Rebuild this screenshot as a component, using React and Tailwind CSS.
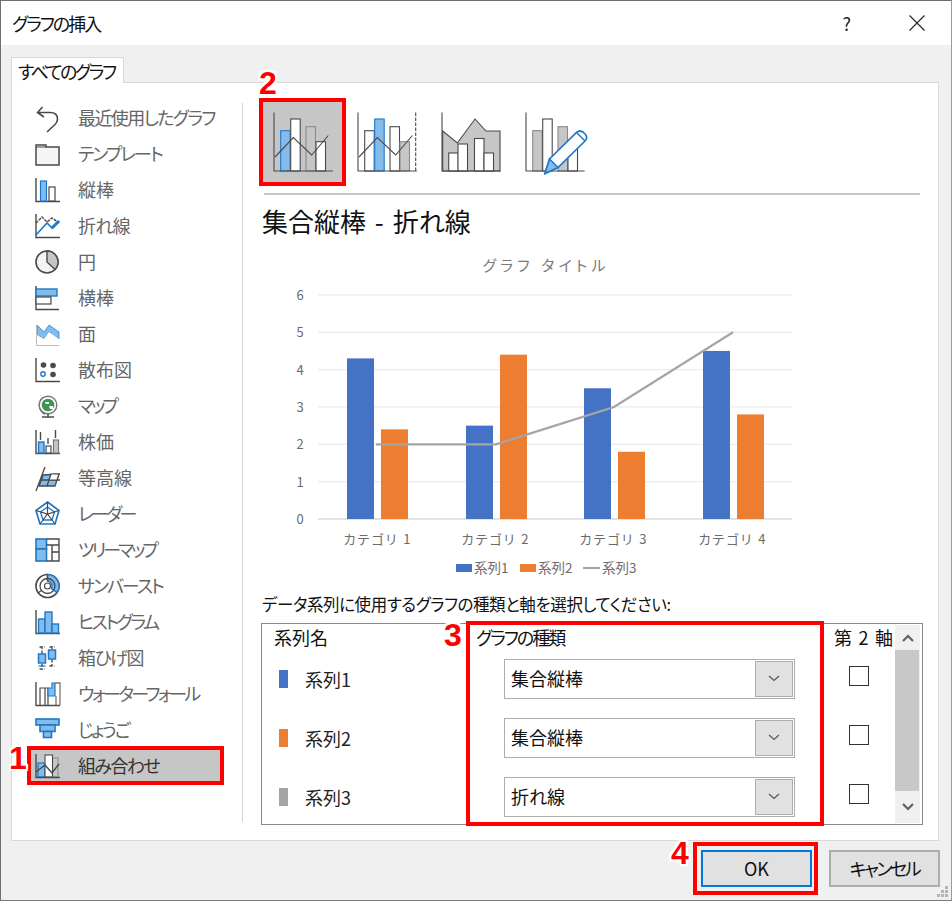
import React from "react";

const D = "#4a4a4a";
const B = "#1f78c8";
const L = "#83bbea";
const G = "#c6c6c6";

const Svg = ({ children }) => (
  <svg width="26" height="26" viewBox="0 0 26 26" fill="none" className="shrink-0 overflow-visible">
    {children}
  </svg>
);
const Axis = () => <path d="M1 1V24.5H25" stroke={D} strokeWidth="1.4" fill="none" />;

const icons = [
  <Svg><path d="M7.5 2L2.5 7.5L9 12M2.5 7.5H15Q22.5 7.5 22.5 14Q22.5 17 20 19.5L12 27" stroke={D} strokeWidth="1.6" /></Svg>,
  <Svg><path d="M1 4H11V6H24V24H1Z" fill="#f5f5f5" stroke={D} strokeWidth="1.5" /><path d="M1 6H11" stroke={D} strokeWidth="1" /></Svg>,
  <Svg><Axis /><rect x="5.5" y="4" width="6" height="20" fill={L} stroke={B} strokeWidth="1.2" /><rect x="14" y="10" width="6" height="14" fill="#fff" stroke={D} strokeWidth="1.2" /></Svg>,
  <Svg><Axis /><path d="M1 22L12 10L17 15L24 8" stroke={B} strokeWidth="1.6" /><path d="M1 10L7 4L12 9L17 5L24 10" stroke={D} strokeWidth="1.4" strokeDasharray="3 1" /><path d="M17 15L24 8" stroke={B} strokeWidth="3" /></Svg>,
  <Svg><circle cx="12" cy="13" r="11" fill="#f4f4f4" stroke={D} strokeWidth="1.6" /><path d="M12 13V2A11 11 0 0 1 20 20.5Z" fill={G} stroke={D} strokeWidth="1.4" /></Svg>,
  <Svg><path d="M1 1V24.5H24" stroke={D} strokeWidth="1.4" /><rect x="1" y="4" width="21" height="7" fill={L} stroke={B} strokeWidth="1.4" /><rect x="1" y="12" width="15" height="7" fill="#fff" stroke={D} strokeWidth="1.2" /></Svg>,
  <Svg><path d="M2 4L9 11L14 4L24 11V18L14 11L9 18L2 14Z" fill={L} stroke={B} strokeWidth="0.7" /><path d="M2 14L9 18L14 11L24 18V24H2Z" fill="#fff" /><path d="M1.5 4V24.5H24" stroke="#bbb" strokeWidth="1" /></Svg>,
  <Svg><Axis /><circle cx="8.5" cy="8" r="2.8" fill={D} /><circle cx="18" cy="8.5" r="2.8" fill={D} /><circle cx="18" cy="17.5" r="2.8" fill={D} /><circle cx="8" cy="17" r="2.2" fill="#fff" stroke={B} strokeWidth="1.4" /></Svg>,
  <Svg><path d="M8 4.5A10 10 0 0 0 10 21" stroke={D} strokeWidth="1.6" /><circle cx="13" cy="12" r="8.8" fill="#fff" stroke="#777" strokeWidth="1.4" /><circle cx="13" cy="12" r="6.3" fill="#3d9651" /><path d="M10 9H14V11H11ZM14 13H18V16H15Z" fill="#fff" /><path d="M7 24H19M13 21V24" stroke={D} strokeWidth="1.5" /></Svg>,
  <Svg><Axis /><rect x="3.5" y="13" width="5.5" height="11" fill={L} stroke={B} strokeWidth="1.4" /><rect x="11" y="17" width="5" height="7" fill="#fff" stroke={D} strokeWidth="1.2" /><rect x="18.5" y="11" width="5" height="13" fill={G} stroke="#777" strokeWidth="1.2" /><path d="M5.5 3V11M13 9V15M20.5 1V9" stroke={D} strokeWidth="1.4" /></Svg>,
  <Svg><path d="M8 10L24 9L20 21L4 21Z" fill={L} stroke={D} strokeWidth="1.3" /><path d="M8 10L4 21" stroke={D} /><path d="M10 2L1 26M16 9L12 21M6 15H25" stroke={D} strokeWidth="1.3" /><path d="M16 9H24L22 15H14Z" fill="#fff" stroke={D} strokeWidth="1.2" /></Svg>,
  <Svg><path d="M12.5 1L24 9.5L20 23H5L1 9.5Z" fill="#fff" stroke={B} strokeWidth="1.7" /><path d="M12.5 6L19.5 11L17 19H8L5.5 11Z" stroke={B} strokeWidth="1.3" /><path d="M12.5 1V13M1 9.5L12.5 13L24 9.5M5 23L12.5 13L20 23" stroke={D} strokeWidth="1.2" /></Svg>,
  <Svg><rect x="1" y="2" width="10.5" height="10" fill={L} stroke={B} strokeWidth="1.6" /><rect x="1" y="12" width="10.5" height="12" fill={L} stroke={B} strokeWidth="1.6" /><path d="M11.5 2H24V24H11.5M17 8V24M11.5 8H24M17 15H24" stroke={D} strokeWidth="1.4" /></Svg>,
  <Svg><circle cx="12.5" cy="13" r="11.5" stroke={D} strokeWidth="1.7" /><path d="M12.5 1.5A11.5 11.5 0 0 1 22 19.5L16.5 15.5A5 5 0 0 0 12.5 8Z" fill={L} stroke={B} strokeWidth="1.5" /><circle cx="12.5" cy="13" r="7.5" stroke={D} strokeWidth="1.3" /><circle cx="12.5" cy="13" r="3" stroke={D} strokeWidth="1.2" /><path d="M3 20L7 17M12.5 1.5V8" stroke={D} strokeWidth="1.2" /></Svg>,
  <Svg><Axis /><rect x="3.5" y="10" width="6.5" height="14" fill={L} stroke={B} strokeWidth="1.4" /><rect x="10" y="3" width="7" height="21" fill={L} stroke={B} strokeWidth="1.4" /><rect x="17" y="15" width="6.5" height="9" fill={L} stroke={B} strokeWidth="1.4" /></Svg>,
  <Svg><path d="M7 1V25M17 1V21M4.5 2H9.5M14.5 2H19.5M4.5 24H9.5M14.5 21H19.5" stroke={D} strokeWidth="1.4" strokeDasharray="3 1.5" /><rect x="3.5" y="9" width="7" height="9" fill={L} stroke={B} strokeWidth="1.5" /><rect x="13.5" y="5" width="7" height="9" fill={L} stroke={B} strokeWidth="1.5" /><path d="M3.5 21H10.5" stroke={B} strokeWidth="1.2" /></Svg>,
  <Svg><Axis /><path d="M5 24V7H10V24M13 24V7H10" stroke={D} strokeWidth="1.2" /><path d="M13 15V7H17V2H20V15Z" fill={L} stroke={B} strokeWidth="1.2" /><path d="M20 2H25V24M21 24V15" stroke="#777" strokeWidth="1.3" /></Svg>,
  <Svg><rect x="1" y="2" width="23" height="6" fill={L} stroke={B} strokeWidth="1.6" /><rect x="5" y="8" width="15" height="6.5" fill={L} stroke={B} strokeWidth="1.6" /><rect x="8.5" y="14.5" width="8" height="6" fill={L} stroke={B} strokeWidth="1.6" /></Svg>,
  <Svg><rect x="15" y="5" width="8" height="19" fill={G} stroke="#888" strokeWidth="1" /><rect x="3" y="10" width="7" height="14" fill={L} stroke={B} strokeWidth="1.3" /><rect x="10" y="2" width="7.5" height="22" fill="#fff" stroke={D} strokeWidth="1.1" /><Axis /><path d="M1 19L10 12L17 20L24 11" stroke={D} strokeWidth="1.4" /></Svg>,
];

const labels = [
  ["最近使用したグラフ", "tracking-[-1.6px]"],
  ["テンプレート", "tracking-[-2px]"],
  ["縦棒", ""],
  ["折れ線", "tracking-[-0.7px]"],
  ["円", ""],
  ["横棒", ""],
  ["面", ""],
  ["散布図", ""],
  ["マップ", "tracking-[-3px]"],
  ["株価", ""],
  ["等高線", ""],
  ["レーダー", "tracking-[-2.8px]"],
  ["ツリーマップ", "tracking-[-3px]"],
  ["サンバースト", "tracking-[-2px]"],
  ["ヒストグラム", "tracking-[-2.5px]"],
  ["箱ひげ図", "tracking-[-1.5px]"],
  ["ウォーターフォール", "tracking-[-2.6px]"],
  ["じょうご", "tracking-[-2.2px]"],
  ["組み合わせ", "tracking-[-1.6px]"],
];

const LINE = "M2 46L20.3 26.5L38.7 44L55.3 24.5";

const Top = ({ children }) => (
  <svg width="60" height="62" viewBox="0 0 60 62" fill="none" className="overflow-visible">{children}</svg>
);
const Bar = ({ x, w = 9.5, top, kind }) => {
  const s = { b: [L, B], w: ["#fff", D], g: [G, "#8a8a8a"] }[kind];
  return <rect x={x} y={top} width={w} height={60 - top} fill={s[0]} stroke={s[1]} strokeWidth="1.1" />;
};
const AxisT = ({ to = 59.7 }) => <path d={`M1 1.5V60H${to}`} stroke={D} strokeWidth="1.1" />;

const tiles = [
  <Top><Bar x={33} top={15.7} kind="g" /><Bar x={7.7} top={19.7} kind="b" /><Bar x={17.7} top={8} kind="w" /><Bar x={43} top={30.7} kind="w" /><AxisT /><path d={LINE} stroke={D} strokeWidth="1.1" /></Top>,
  <Top><Bar x={7.7} top={19.7} kind="w" /><Bar x={17.7} top={8} kind="b" /><Bar x={33} top={15.7} kind="w" /><Bar x={43} top={30.7} kind="g" /><AxisT /><path d="M58.7 1.5V60" stroke={D} strokeWidth="1.1" strokeDasharray="3.5 1.5" /><path d={LINE} stroke={D} strokeWidth="1.1" /></Top>,
  <Top><path d="M1.7 20L16.3 32L34 8L45 20H59V60H1.7Z" fill={G} stroke={D} strokeWidth="1.1" /><Bar x={7.7} top={42} kind="w" /><Bar x={17} top={33} kind="w" /><Bar x={33.5} top={27.5} kind="w" /><Bar x={43} top={42} kind="w" /><AxisT /></Top>,
  <Top><Bar x={7.7} top={19.7} kind="g" /><Bar x={17.7} top={8} kind="w" /><Bar x={33} top={15.7} kind="g" /><Bar x={43} top={30.7} kind="w" /><AxisT /><path d="M24.5 48L51.5 21.5Q55 18.5 58.5 21.5L60.5 23.5Q63 27 60 30L33 56.5L20 62.5Z" fill="#fff" stroke={B} strokeWidth="1.7" /><path d="M24.5 48L33 56.5L20 62.5Z" fill={L} stroke={B} strokeWidth="1.5" /><path d="M51.5 21.5L60 30" stroke={B} strokeWidth="1.4" /></Top>,
];

const GRID = [6, 5, 4, 3, 2, 1, 0];
const yOf = (v) => 519 - v * 37.35;
const cats = [
  { n: "カテゴリ 1", b: [347, 4.3], o: [381, 2.4], c: 378 },
  { n: "カテゴリ 2", b: [466, 2.5], o: [500, 4.4], c: 496 },
  { n: "カテゴリ 3", b: [584, 3.5], o: [618, 1.8], c: 614 },
  { n: "カテゴリ 4", b: [703, 4.5], o: [737, 2.8], c: 733 },
];
const FONT = "'Noto Sans CJK JP', sans-serif";

const Chart = () => (
  <svg width="660" height="340" viewBox="262 250 660 340" className="block" fontFamily={FONT} style={{ fontFeatureSettings: "'palt'" }}>
    <text x="546" y="271" textAnchor="middle" fontSize="15" fill="#7a7a7a" letterSpacing="4.1">グラフ タイトル</text>
    {GRID.map((v) => (
      <g key={v}>
        <line x1="318" x2="792" y1={yOf(v)} y2={yOf(v)} stroke={v === 0 ? "#d9d9d9" : "#ececec"} strokeWidth="1.3" />
        <text x="300" y={yOf(v) + 5} textAnchor="middle" fontSize="13" fill="#6b6b6b">{v}</text>
      </g>
    ))}
    {cats.map((c) => (
      <g key={c.n}>
        <rect x={c.b[0]} y={yOf(c.b[1])} width="27" height={c.b[1] * 37.35} fill="#4472c4" />
        <rect x={c.o[0]} y={yOf(c.o[1])} width="27" height={c.o[1] * 37.35} fill="#ed7d31" />
        <text x={c.c} y="544" textAnchor="middle" fontSize="13" fill="#6b6b6b" letterSpacing="2">{c.n}</text>
      </g>
    ))}
    <path d={`M376 ${yOf(2)}L496 ${yOf(2)}L614 ${yOf(3)}L733 ${yOf(5)}`} fill="none" stroke="#a5a5a5" strokeWidth="2.2" />
    <rect x="456" y="564" width="16" height="8" fill="#4472c4" />
    <text x="474" y="573" fontSize="13.5" fill="#6b6b6b">系列1</text>
    <rect x="520" y="564" width="16" height="8" fill="#ed7d31" />
    <text x="538" y="573" fontSize="13.5" fill="#6b6b6b">系列2</text>
    <line x1="583" x2="600" y1="568" y2="568" stroke="#a5a5a5" strokeWidth="2" />
    <text x="602" y="573" fontSize="13.5" fill="#6b6b6b">系列3</text>
  </svg>
);

const Chevron = () => (
  <svg width="12" height="7" viewBox="0 0 12 7" fill="none"><path d="M1 1L6 5.5L11 1" stroke="#555" strokeWidth="1.1" /></svg>
);

const Row = ({ color, name, type }) => (
  <div className="flex items-center h-[59px] shrink-0">
    <div className="w-[242px] flex items-center pl-[17px]">
      <div className="w-[9px] h-[18px]" style={{ backgroundColor: color }} />
      <span className="ml-[17px] text-[18px] leading-[24px] text-[#222]">{name}</span>
    </div>
    <div className="w-[291px] h-[40px] border border-[#adadad] bg-white flex items-center justify-between pl-[6px] p-[1px]">
      <span className="text-[18px] leading-[24px] pb-[2px] text-[#111]">{type}</span>
      <div className="w-[38px] h-full bg-[#e1e1e1] border border-[#adadad] flex items-center justify-center"><Chevron /></div>
    </div>
    <div className="ml-[54px] mb-[5px] w-[20px] h-[20px] border border-[#333] bg-white" />
  </div>
);

const Num = ({ className, children }) => (
  <div className={`absolute font-bold text-[#ff0000] text-[32px] leading-[30px] [font-family:'Liberation_Sans',sans-serif] [text-shadow:2px_0_0_#fff,-2px_0_0_#fff,0_2px_0_#fff,0_-2px_0_#fff,2px_2px_0_#fff,-2px_-2px_0_#fff,2px_-2px_0_#fff,-2px_2px_0_#fff] ${className}`}>{children}</div>
);

export default function App() {
  return (
    <div className="relative w-[952px] h-[901px] overflow-hidden [font-family:'Noto_Sans_CJK_JP',sans-serif] [font-feature-settings:'palt']">
      <div className="h-full border border-[#6f6f6f] border-r-[#9a9a9a] border-b-[#7a7a7a] flex flex-col bg-[#f0f0f0]">
        <div className="h-[44px] shrink-0 bg-white flex items-center pl-[11px] pr-[26px]">
          <span className="text-[18px] leading-[24px] tracking-[-2px] text-[#111] flex-1">グラフの挿入</span>
          <span className="text-[18px] leading-[24px] text-[#222] mr-[58px]">?</span>
          <svg width="16" height="16" viewBox="0 0 16 16" fill="none"><path d="M0.5 0.5L15.5 15.5M15.5 0.5L0.5 15.5" stroke="#222" strokeWidth="1.1" /></svg>
        </div>
        <div className="flex-1 flex flex-col pt-[12px] pl-[10px] pr-[12px]">
          <div className="w-[113px] h-[26px] -mb-[1px] z-10 bg-white border border-[#d9d9d9] border-b-0 flex items-center pl-[6px] text-[18px] leading-[24px] tracking-[-2.4px] whitespace-nowrap text-[#111]">すべてのグラフ</div>
          <div className="h-[759px] bg-white border border-[#d9d9d9] flex shrink-0">
            <div className="w-[230px] shrink-0 pt-[17px] pl-[17px]">
              {labels.map(([t, tr], i) => (
                <div key={t} className={`h-[36px] w-[193px] flex items-center pl-[6px] gap-[17px] ${i === 18 ? "bg-[#c6c6c6]" : ""}`}>
                  {icons[i]}
                  <span className={`text-[18px] leading-[24px] pb-[2px] whitespace-nowrap ${tr} ${i === 18 ? "text-[#333]" : "text-[#666]"}`}>{t}</span>
                </div>
              ))}
            </div>
            <div className="w-px bg-[#d4d4d4] mt-[20px] mb-[18px]" />
            <div className="flex-1 pl-[19px] pt-[19px] min-w-0">
              <div className="flex gap-[4px] ml-[1px] h-[80px]">
                {tiles.map((t, i) => (
                  <div key={i} className={`w-[80px] h-[80px] flex items-center justify-center ${i === 0 ? "bg-[#c6c6c6]" : ""}`}>{t}</div>
                ))}
              </div>
              <div className="h-[2px] bg-[#c6c6c6] mt-[11px] ml-[2px] w-[656px]" />
              <div className="h-[36px] mt-[8px] text-[26px] leading-[36px] text-[#111] whitespace-nowrap [word-spacing:3px]">集合縦棒 - 折れ線</div>
              <div className="mt-[11px]"><Chart /></div>
              <div className="h-[24px] mt-[2px] text-[16.5px] leading-[24px] tracking-[-0.4px] text-[#111] whitespace-nowrap">データ系列に使用するグラフの種類と軸を選択してください:</div>
              <div className="mt-[7px] -ml-[1px] w-[662px] h-[202px] border border-[#8a8a8a] flex pr-[2px] py-[1px] bg-white">
                <div className="w-[633px] overflow-hidden flex flex-col">
                  <div className="h-[24px] shrink-0 flex items-center text-[18px] leading-[24px] text-[#111]">
                    <span className="w-[214px] pl-[12px]">系列名</span>
                    <span className="w-[358px] tracking-[-2px]">グラフの種類</span>
                    <span className="whitespace-nowrap [word-spacing:2.5px]">第 2 軸</span>
                  </div>
                  <Row color="#4472c4" name="系列1" type="集合縦棒" />
                  <Row color="#ed7d31" name="系列2" type="集合縦棒" />
                  <Row color="#a5a5a5" name="系列3" type="折れ線" />
                </div>
                <div className="w-[25px] flex flex-col bg-[#f0f0f0]">
                  <div className="h-[25px] flex items-center justify-center">
                    <svg width="12" height="8" viewBox="0 0 12 8" fill="none"><path d="M1 7L6 2L11 7" stroke="#606060" strokeWidth="2.2" /></svg>
                  </div>
                  <div className="h-[141px] w-[24px] bg-[#c8c8c8]" />
                  <div className="flex-1 flex items-center justify-center">
                    <svg width="12" height="8" viewBox="0 0 12 8" fill="none"><path d="M1 1L6 6L11 1" stroke="#606060" strokeWidth="2.2" /></svg>
                  </div>
                </div>
              </div>
            </div>
          </div>
          <div className="flex justify-end gap-[17px] pt-[9px] -mr-[1px]">
            <div className="w-[111px] h-[37px] bg-[#e1e1e1] border-2 border-[#0078d7] flex items-center justify-center text-[18px] text-[#111]">OK</div>
            <div className="w-[111px] h-[37px] bg-[#e1e1e1] border-2 border-[#adadad] flex items-center justify-center text-[18px] tracking-[-2.4px] text-[#111]">キャンセル</div>
          </div>
        </div>
      </div>

      {/* annotation overlays */}
      <div className="absolute left-[27px] top-[746px] w-[197px] h-[39px] border-[4px] border-[#ff0000]" />
      <div className="absolute left-[259px] top-[98px] w-[87px] h-[88px] border-[4px] border-[#ff0000]" />
      <div className="absolute left-[466px] top-[621px] w-[358px] h-[205px] border-[4px] border-[#ff0000]" />
      <div className="absolute left-[693px] top-[842px] w-[125px] h-[53px] border-[4px] border-[#ff0000]" />
      <Num className="left-[9px] top-[743px]">1</Num>
      <Num className="left-[259px] top-[68px]">2</Num>
      <Num className="left-[444px] top-[620px]">3</Num>
      <Num className="left-[671px] top-[838px]">4</Num>

      <svg className="absolute left-[937px] top-[886px]" width="12" height="12" viewBox="0 0 12 12">
        <path d="M8 0h3v3H8zM4 4h3v3H4zM8 4h3v3H8zM0 8h3v3H0zM4 8h3v3H4zM8 8h3v3H8z" fill="#b5b5b5" />
      </svg>
    </div>
  );
}
